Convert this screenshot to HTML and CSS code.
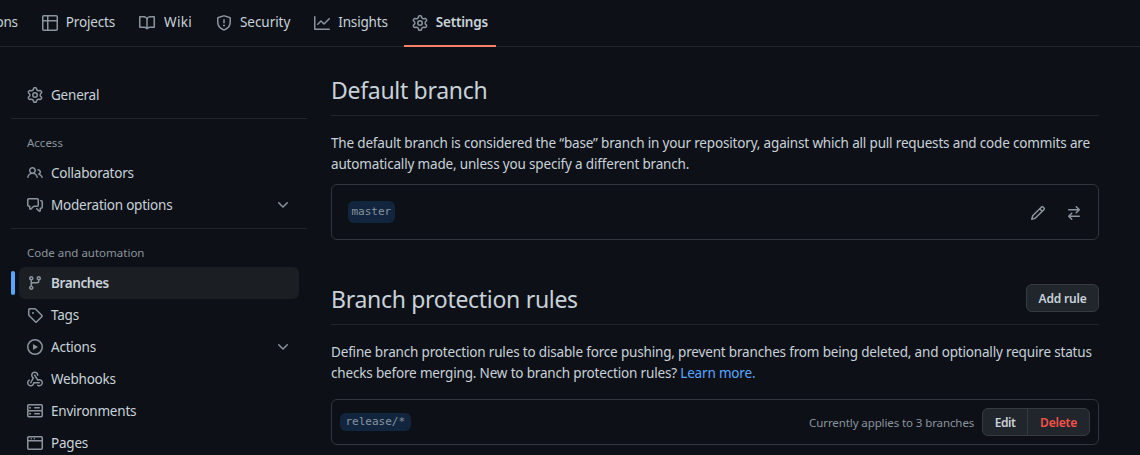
FILE: index.html
```html
<!DOCTYPE html>
<html>
<head>
	<title>Branches</title>
	<meta charset="utf-8">
	<link rel="stylesheet" href="styles.css">
</head>
<body>

	<svg class="sprites" xmlns="http://www.w3.org/2000/svg">
		<symbol id="i-gear" viewBox="0 0 16 16"><path d="M8 0a8.2 8.2 0 0 1 .701.031C9.444.095 9.99.645 10.16 1.29l.288 1.107c.018.066.079.158.212.224.231.114.454.243.668.386.123.082.233.09.299.071l1.103-.303c.644-.176 1.392.021 1.82.63.27.385.506.792.704 1.218.315.675.111 1.422-.364 1.891l-.814.806c-.049.048-.098.147-.088.294.016.257.016.515 0 .772-.01.147.038.246.088.294l.814.806c.475.469.679 1.216.364 1.891a7.977 7.977 0 0 1-.704 1.217c-.428.61-1.176.807-1.82.63l-1.102-.302c-.067-.019-.177-.011-.3.071a5.909 5.909 0 0 1-.668.386c-.133.066-.194.158-.211.224l-.29 1.106c-.168.646-.715 1.196-1.458 1.26a8.006 8.006 0 0 1-1.402 0c-.743-.064-1.289-.614-1.458-1.26l-.289-1.106c-.018-.066-.079-.158-.212-.224a5.738 5.738 0 0 1-.668-.386c-.123-.082-.233-.09-.299-.071l-1.103.303c-.644.176-1.392-.021-1.82-.63a8.12 8.12 0 0 1-.704-1.218c-.315-.675-.111-1.422.363-1.891l.815-.806c.05-.048.098-.147.088-.294a6.214 6.214 0 0 1 0-.772c.01-.147-.038-.246-.088-.294l-.815-.806C.635 6.045.431 5.298.746 4.623a7.92 7.92 0 0 1 .704-1.217c.428-.61 1.176-.807 1.82-.63l1.102.302c.067.019.177.011.3-.071.214-.143.437-.272.668-.386.133-.066.194-.158.211-.224l.29-1.106C6.009.645 6.556.095 7.299.03 7.53.01 7.764 0 8 0Zm-.571 1.525c-.036.003-.108.036-.137.146l-.289 1.105c-.147.561-.549.967-.998 1.189-.173.086-.34.183-.5.29-.417.278-.97.423-1.529.27l-1.103-.303c-.109-.03-.175.016-.195.045-.22.312-.412.644-.573.99-.014.031-.021.11.059.19l.815.806c.411.406.562.957.53 1.456a4.709 4.709 0 0 0 0 .582c.032.499-.119 1.05-.53 1.456l-.815.806c-.081.08-.073.159-.059.19.162.346.353.677.573.989.02.03.085.076.195.046l1.102-.303c.56-.153 1.113-.008 1.53.27.161.107.328.204.501.29.447.222.85.629.997 1.189l.289 1.105c.029.109.101.143.137.146a6.6 6.6 0 0 0 1.142 0c.036-.003.108-.036.137-.146l.289-1.105c.147-.561.549-.967.998-1.189.173-.086.34-.183.5-.29.417-.278.97-.423 1.529-.27l1.103.303c.109.029.175-.016.195-.045.22-.313.411-.644.573-.99.014-.031.021-.11-.059-.19l-.815-.806c-.411-.406-.562-.957-.53-1.456a4.709 4.709 0 0 0 0-.582c-.032-.499.119-1.05.53-1.456l.815-.806c.081-.08.073-.159.059-.19a6.464 6.464 0 0 0-.573-.989c-.02-.03-.085-.076-.195-.046l-1.102.303c-.56.153-1.113.008-1.53-.27a4.44 4.44 0 0 0-.501-.29c-.447-.222-.85-.629-.997-1.189l-.289-1.105c-.029-.11-.101-.143-.137-.146a6.6 6.6 0 0 0-1.142 0ZM11 8a3 3 0 1 1-6 0 3 3 0 0 1 6 0ZM9.5 8a1.5 1.5 0 1 0-3.001.001A1.5 1.5 0 0 0 9.5 8Z"/></symbol>
		<symbol id="i-play" viewBox="0 0 16 16"><path d="M8 0a8 8 0 1 1 0 16A8 8 0 0 1 8 0ZM1.5 8a6.5 6.5 0 1 0 13 0 6.5 6.5 0 0 0-13 0Zm4.879-2.773 4.264 2.559a.25.25 0 0 1 0 .428l-4.264 2.559A.25.25 0 0 1 6 10.559V5.442a.25.25 0 0 1 .379-.215Z"/></symbol>
		<symbol id="i-chevron" viewBox="0 0 16 16"><path d="M12.78 5.22a.749.749 0 0 1 0 1.06l-4.25 4.25a.749.749 0 0 1-1.06 0L3.22 6.28a.749.749 0 1 1 1.06-1.06L8 8.939l3.72-3.719a.749.749 0 0 1 1.06 0Z"/></symbol>
	</svg>

	<nav class="tabs-bar">
		<div class="tabs">
			<a class="tab"><svg class="icon"><use href="#i-play"/></svg>Actions</a>
			<a class="tab"><svg class="icon" viewBox="0 0 16 16"><path d="M0 1.75C0 .784.784 0 1.75 0h12.5C15.216 0 16 .784 16 1.75v12.5A1.75 1.75 0 0 1 14.25 16H1.75A1.75 1.75 0 0 1 0 14.25ZM6.5 6.5v8h7.75a.25.25 0 0 0 .25-.25V6.5Zm8-1.5V1.75a.25.25 0 0 0-.25-.25H6.5V5Zm-13 1.5v7.75c0 .138.112.25.25.25H5v-8ZM5 5V1.5H1.75a.25.25 0 0 0-.25.25V5Z"/></svg>Projects</a>
			<a class="tab tab-wiki"><svg class="icon" viewBox="0 0 16 16"><path d="M0 1.75A.75.75 0 0 1 .75 1h4.253c1.227 0 2.317.59 3 1.501A3.743 3.743 0 0 1 11.006 1h4.245a.75.75 0 0 1 .75.75v10.5a.75.75 0 0 1-.75.75h-4.507a2.25 2.25 0 0 0-1.591.659l-.622.621a.75.75 0 0 1-1.06 0l-.622-.621A2.25 2.25 0 0 0 5.258 13H.75a.75.75 0 0 1-.75-.75Zm7.251 10.324.004-5.073-.002-2.253A2.25 2.25 0 0 0 5.003 2.5H1.5v9h3.757a3.75 3.75 0 0 1 1.994.574ZM8.755 4.75l-.004 7.322a3.752 3.752 0 0 1 1.992-.572H14.5v-9h-3.495a2.25 2.25 0 0 0-2.25 2.25Z"/></svg>Wiki</a>
			<a class="tab tab-security"><svg class="icon" viewBox="0 0 16 16"><path d="M7.467.133a1.748 1.748 0 0 1 1.066 0l5.25 1.68A1.75 1.75 0 0 1 15 3.48V7c0 1.566-.32 3.182-1.303 4.682-.983 1.498-2.585 2.813-5.032 3.855a1.697 1.697 0 0 1-1.33 0c-2.447-1.042-4.049-2.357-5.032-3.855C1.32 10.182 1 8.566 1 7V3.48a1.75 1.75 0 0 1 1.217-1.667Zm.61 1.429a.25.25 0 0 0-.153 0l-5.25 1.68a.25.25 0 0 0-.174.238V7c0 1.358.275 2.666 1.057 3.86.784 1.194 2.121 2.34 4.366 3.297a.196.196 0 0 0 .154 0c2.245-.956 3.582-2.104 4.366-3.298C13.225 9.666 13.5 8.36 13.5 7V3.48a.251.251 0 0 0-.174-.237l-5.25-1.68ZM8.75 4.75v3a.75.75 0 0 1-1.5 0v-3a.75.75 0 0 1 1.5 0ZM9 10.5a1 1 0 1 1-2 0 1 1 0 0 1 2 0Z"/></svg>Security</a>
			<a class="tab"><svg class="icon" viewBox="0 0 16 16"><path d="M1.5 1.75V13.5h13.75a.75.75 0 0 1 0 1.5H.75a.75.75 0 0 1-.75-.75V1.75a.75.75 0 0 1 1.5 0Zm14.28 2.53-5.25 5.25a.75.75 0 0 1-1.06 0L7 7.06 4.28 9.78a.75.75 0 0 1-1.06-1.06l3.25-3.25a.75.75 0 0 1 1.06 0L10 7.94l4.72-4.72a.75.75 0 0 1 1.06 1.06Z"/></svg>Insights</a>
			<a class="tab selected"><svg class="icon"><use href="#i-gear"/></svg>Settings</a>
		</div>
	</nav>

	<div class="page">
		<aside class="sidebar">
			<a class="side-item"><svg class="icon"><use href="#i-gear"/></svg>General</a>
			<hr class="side-rule">
			<h3 class="side-head">Access</h3>
			<a class="side-item"><svg class="icon" viewBox="0 0 16 16"><path d="M2 5.5a3.5 3.5 0 1 1 5.898 2.549 5.508 5.508 0 0 1 3.034 4.084.75.75 0 1 1-1.482.235 4 4 0 0 0-7.9 0 .75.75 0 0 1-1.482-.236A5.507 5.507 0 0 1 3.102 8.05 3.493 3.493 0 0 1 2 5.5ZM11 4a3.001 3.001 0 0 1 2.22 5.018 5.01 5.01 0 0 1 2.56 3.012.749.749 0 0 1-.885.954.752.752 0 0 1-.549-.514 3.507 3.507 0 0 0-2.522-2.372.75.75 0 0 1-.574-.73v-.352a.75.75 0 0 1 .416-.672A1.5 1.5 0 0 0 11 5.5.75.75 0 0 1 11 4Zm-5.5-.5a2 2 0 1 0-.001 3.999A2 2 0 0 0 5.5 3.5Z"/></svg>Collaborators</a>
			<a class="side-item"><svg class="icon" viewBox="0 0 16 16"><path d="M1.75 1h8.5c.966 0 1.75.784 1.75 1.75v5.5A1.75 1.75 0 0 1 10.25 10H7.061l-2.574 2.573A1.458 1.458 0 0 1 2 11.543V10h-.25A1.75 1.75 0 0 1 0 8.25v-5.5C0 1.784.784 1 1.75 1ZM1.5 2.75v5.5c0 .138.112.25.25.25h1a.75.75 0 0 1 .75.75v2.19l2.72-2.72a.749.749 0 0 1 .53-.22h3.5a.25.25 0 0 0 .25-.25v-5.5a.25.25 0 0 0-.25-.25h-8.5a.25.25 0 0 0-.25.25Zm13 2a.25.25 0 0 0-.25-.25h-.5a.75.75 0 0 1 0-1.5h.5c.966 0 1.75.784 1.75 1.75v5.5A1.75 1.75 0 0 1 14.25 12H14v1.543a1.458 1.458 0 0 1-2.487 1.03L9.22 12.28a.749.749 0 0 1 .326-1.275.749.749 0 0 1 .734.215l2.22 2.22v-2.19a.75.75 0 0 1 .75-.75h1a.25.25 0 0 0 .25-.25Z"/></svg>Moderation options<svg class="icon chevron"><use href="#i-chevron"/></svg></a>
			<hr class="side-rule">
			<h3 class="side-head">Code and automation</h3>
			<a class="side-item current"><svg class="icon" viewBox="0 0 16 16"><path d="M9.5 3.25a2.25 2.25 0 1 1 3 2.122V6A2.5 2.5 0 0 1 10 8.5H6a1 1 0 0 0-1 1v1.128a2.251 2.251 0 1 1-1.5 0V5.372a2.25 2.25 0 1 1 1.5 0v1.836A2.493 2.493 0 0 1 6 7h4a1 1 0 0 0 1-1v-.628A2.25 2.25 0 0 1 9.5 3.25Zm-6 0a.75.75 0 1 0 1.5 0 .75.75 0 0 0-1.5 0Zm8.25-.75a.75.75 0 1 0 0 1.5.75.75 0 0 0 0-1.5ZM4.25 12a.75.75 0 1 0 0 1.5.75.75 0 0 0 0-1.5Z"/></svg>Branches</a>
			<a class="side-item"><svg class="icon" viewBox="0 0 16 16"><path d="M1 7.775V2.75C1 1.784 1.784 1 2.75 1h5.025c.464 0 .91.184 1.238.513l6.25 6.25a1.75 1.75 0 0 1 0 2.474l-5.026 5.026a1.75 1.75 0 0 1-2.474 0l-6.25-6.25A1.752 1.752 0 0 1 1 7.775Zm1.5 0c0 .066.026.13.073.177l6.25 6.25a.25.25 0 0 0 .354 0l5.025-5.025a.25.25 0 0 0 0-.354l-6.25-6.25a.25.25 0 0 0-.177-.073H2.75a.25.25 0 0 0-.25.25ZM6 5a1 1 0 1 1 0 2 1 1 0 0 1 0-2Z"/></svg>Tags</a>
			<a class="side-item"><svg class="icon"><use href="#i-play"/></svg>Actions<svg class="icon chevron"><use href="#i-chevron"/></svg></a>
			<a class="side-item"><svg class="icon" viewBox="0 0 16 16"><path d="M5.5 4.25a2.25 2.25 0 0 1 4.5 0 .75.75 0 0 0 1.5 0 3.75 3.75 0 1 0-6.14 2.889l-2.272 4.258a.75.75 0 0 0 1.324.706L7 7.25a.75.75 0 0 0-.309-1.015A2.25 2.25 0 0 1 5.5 4.25Z"/><path d="M7.364 3.607a.75.75 0 0 1 1.03.257l2.608 4.349a3.75 3.75 0 1 1-.628 6.785.75.75 0 0 1 .752-1.299 2.25 2.25 0 1 0-.033-3.88.75.75 0 0 1-1.03-.256L7.107 4.636a.75.75 0 0 1 .257-1.03Z"/><path d="M2.9 8.776A.75.75 0 0 1 2.625 9.8 2.25 2.25 0 1 0 6 11.75a.75.75 0 0 1 .75-.751h5.5a.75.75 0 0 1 0 1.5H7.425a3.751 3.751 0 1 1-5.55-3.998.75.75 0 0 1 1.024.274Z"/></svg>Webhooks</a>
			<a class="side-item"><svg class="icon" viewBox="0 0 16 16"><path d="M1.75 1h12.5c.966 0 1.75.784 1.75 1.75v4c0 .372-.116.717-.314 1 .198.283.314.628.314 1v4a1.75 1.75 0 0 1-1.75 1.75H1.75A1.75 1.75 0 0 1 0 12.75v-4c0-.358.109-.707.314-1a1.739 1.739 0 0 1-.314-1v-4C0 1.784.784 1 1.75 1ZM1.5 2.75v4c0 .138.112.25.25.25h12.5a.25.25 0 0 0 .25-.25v-4a.25.25 0 0 0-.25-.25H1.75a.25.25 0 0 0-.25.25Zm.25 5.75a.25.25 0 0 0-.25.25v4c0 .138.112.25.25.25h12.5a.25.25 0 0 0 .25-.25v-4a.25.25 0 0 0-.25-.25ZM7 4.75A.75.75 0 0 1 7.75 4h4.5a.75.75 0 0 1 0 1.5h-4.5A.75.75 0 0 1 7 4.75Zm0 6a.75.75 0 0 1 .75-.75h4.5a.75.75 0 0 1 0 1.5h-4.5a.75.75 0 0 1-.75-.75ZM4 4.75a1 1 0 1 1-2 0 1 1 0 0 1 2 0Zm0 6a1 1 0 1 1-2 0 1 1 0 0 1 2 0Z"/></svg>Environments</a>
			<a class="side-item"><svg class="icon" viewBox="0 0 16 16"><path d="M0 2.75C0 1.784.784 1 1.75 1h12.5c.966 0 1.75.784 1.75 1.75v10.5A1.75 1.75 0 0 1 14.25 15H1.75A1.75 1.75 0 0 1 0 13.25ZM14.5 6.5h-13v6.75c0 .138.112.25.25.25h12.5a.25.25 0 0 0 .25-.25Zm-13-1.5h13V2.75a.25.25 0 0 0-.25-.25H1.75a.25.25 0 0 0-.25.25ZM5 3.75a.75.75 0 1 1-1.5 0 .75.75 0 0 1 1.5 0Zm3 0a.75.75 0 1 1-1.5 0 .75.75 0 0 1 1.5 0Z"/></svg>Pages</a>
		</aside>

		<main class="content">
			<div class="section-head">
				<h2>Default branch</h2>
			</div>
			<p class="note">The default branch is considered the “base” branch in your repository, against which all pull requests and code commits are automatically made, unless you specify a different branch.</p>
			<div class="box default-box">
				<code class="pill">master</code>
				<div class="box-actions">
					<svg class="icon" viewBox="0 0 16 16"><path d="M11.013 1.427a1.75 1.75 0 0 1 2.474 0l1.086 1.086a1.75 1.75 0 0 1 0 2.474l-8.61 8.61c-.21.21-.47.364-.756.445l-3.251.93a.75.75 0 0 1-.927-.928l.929-3.25c.081-.286.235-.547.445-.758l8.61-8.61Zm.176 4.823L9.75 4.81l-6.286 6.287a.253.253 0 0 0-.064.108l-.558 1.953 1.953-.558a.253.253 0 0 0 .108-.064Zm1.238-3.763a.25.25 0 0 0-.354 0L10.811 3.75l1.439 1.44 1.263-1.263a.25.25 0 0 0 0-.354Z"/></svg>
					<svg class="icon" viewBox="0 0 16 16"><path d="M5.22 14.78a.75.75 0 0 0 1.06-1.06L4.56 12h8.69a.75.75 0 0 0 0-1.5H4.56l1.72-1.72a.75.75 0 0 0-1.06-1.06l-3 3a.75.75 0 0 0 0 1.06l3 3Zm5.56-6.5a.75.75 0 1 1-1.06-1.06l1.72-1.72H2.75a.75.75 0 0 1 0-1.5h8.69L9.72 2.28a.75.75 0 0 1 1.06-1.06l3 3a.75.75 0 0 1 0 1.06l-3 3Z"/></svg>
				</div>
			</div>

			<div class="section-head rules-head">
				<h2>Branch protection rules</h2>
				<button class="btn">Add rule</button>
			</div>
			<p class="note">Define branch protection rules to disable force pushing, prevent branches from being deleted, and optionally require status checks before merging. New to branch protection rules? <a class="link">Learn more.</a></p>
			<div class="box rule-box">
				<code class="pill small">release/*</code>
				<div class="rule-right">
					<span class="applies">Currently applies to 3 branches</span>
					<div class="btn-group">
						<button class="btn btn-edit">Edit</button>
						<button class="btn danger">Delete</button>
					</div>
				</div>
			</div>
		</main>
	</div>

</body>
</html>
```

FILE: styles.css
```css
* {
	box-sizing: border-box;
	margin: 0;
	padding: 0;
}

html, body {
	height: 455px;
	overflow: hidden;
}

body {
	background: #0d1117;
	color: #c9d1d9;
	font-family: "Noto Sans", "Open Sans", sans-serif;
	font-size: 13.5px;
	line-height: 21px;
	letter-spacing: -0.17px;
}

.sprites {
	display: none;
}

.icon {
	width: 16px;
	height: 16px;
	flex: none;
	fill: #8b949e;
}

/* top tabs */
.tabs-bar {
	height: 47px;
	border-bottom: 1px solid #21262d;
}

.tabs {
	width: 496px;
	height: 47px;
	display: flex;
	justify-content: flex-end;
	gap: 8px;
	overflow: hidden;
}

.tab {
	display: flex;
	align-items: center;
	flex: none;
	gap: 8px;
	height: 47px;
	padding: 0 8px;
	border-bottom: 2px solid transparent;
}

.tab-wiki {
	gap: 9px;
	letter-spacing: 0.3px;
}

.tab-security {
	letter-spacing: -0.05px;
}

.tab.selected {
	font-weight: 600;
	letter-spacing: -0.2px;
	color: #c9d1d9;
	border-bottom-color: #f78166;
}

/* layout */
.page {
	display: flex;
	gap: 24px;
	padding: 32px 0 0 11px;
}

.sidebar {
	width: 296px;
	flex: none;
}

.content {
	width: 768px;
	flex: none;
	margin-top: -2px;
}

/* sidebar */
.side-item {
	position: relative;
	display: flex;
	align-items: center;
	gap: 8px;
	height: 32px;
	margin: 0 8px;
	padding: 0 8px;
	border-radius: 6px;
	letter-spacing: -0.22px;
}

.side-item.current {
	background: #1b1f24;
	font-weight: 600;
	letter-spacing: -0.4px;
}

.side-item.current::before {
	content: "";
	position: absolute;
	left: -8px;
	top: 4px;
	width: 4px;
	height: 24px;
	border-radius: 6px;
	background: #58a6ff;
}

.chevron {
	margin-left: auto;
}

.side-rule {
	border: 0;
	border-top: 1px solid #21262d;
	margin: 7px 0 0;
}

.side-head {
	font-size: 11.5px;
	font-weight: 400;
	line-height: 18px;
	letter-spacing: 0;
	color: #8b949e;
	padding: 15px 16px 5px;
}

/* main column */
.section-head {
	display: flex;
	align-items: flex-start;
	justify-content: space-between;
	height: 39px;
	border-bottom: 1px solid #21262d;
}

.section-head h2 {
	margin-top: -2px;
	font-size: 23px;
	font-weight: 400;
	line-height: 30px;
	letter-spacing: -0.3px;
}

.rules-head {
	height: 40px;
	margin-top: 45px;
}

.rules-head h2 {
	margin-top: -1px;
}

.rules-head .btn {
	margin-top: -1px;
	padding: 0 11.5px;
}

.note {
	margin-top: 17px;
}

.box {
	display: flex;
	align-items: center;
	justify-content: space-between;
	border: 1px solid #30363d;
	border-radius: 6px;
}

.default-box {
	height: 56px;
	margin-top: 9px;
	padding: 0 16px;
}

.rule-box {
	height: 46px;
	margin-top: 15px;
	padding: 0 8px;
}

.box-actions {
	display: flex;
	gap: 20px;
	margin-top: 1px;
}

.pill {
	display: block;
	font-family: "DejaVu Sans Mono", monospace;
	font-size: 11px;
	line-height: 22px;
	letter-spacing: 0;
	padding: 0 3.5px;
	border-radius: 6px;
	background: #11253f;
	color: #8b949e;
}

.pill.small {
	line-height: 18px;
	padding: 0 5.5px;
}

.rule-right {
	display: flex;
	align-items: center;
	gap: 8px;
}

.applies {
	font-size: 11.5px;
	letter-spacing: -0.1px;
	color: #8b949e;
}

.btn {
	height: 28px;
	padding: 0 12px;
	font-family: inherit;
	font-size: 12px;
	font-weight: 600;
	letter-spacing: -0.2px;
	color: #c9d1d9;
	background: #21262d;
	border: 1px solid #363b42;
	border-radius: 6px;
}

.btn.danger {
	color: #f85149;
}

.btn-edit {
	padding: 0 11.5px;
	letter-spacing: -0.4px;
}

.btn-group {
	display: flex;
}

.btn-group .btn:first-child {
	border-radius: 6px 0 0 6px;
}

.btn-group .btn:last-child {
	border-radius: 0 6px 6px 0;
	margin-left: -1px;
}

.link {
	color: #58a6ff;
}
```
